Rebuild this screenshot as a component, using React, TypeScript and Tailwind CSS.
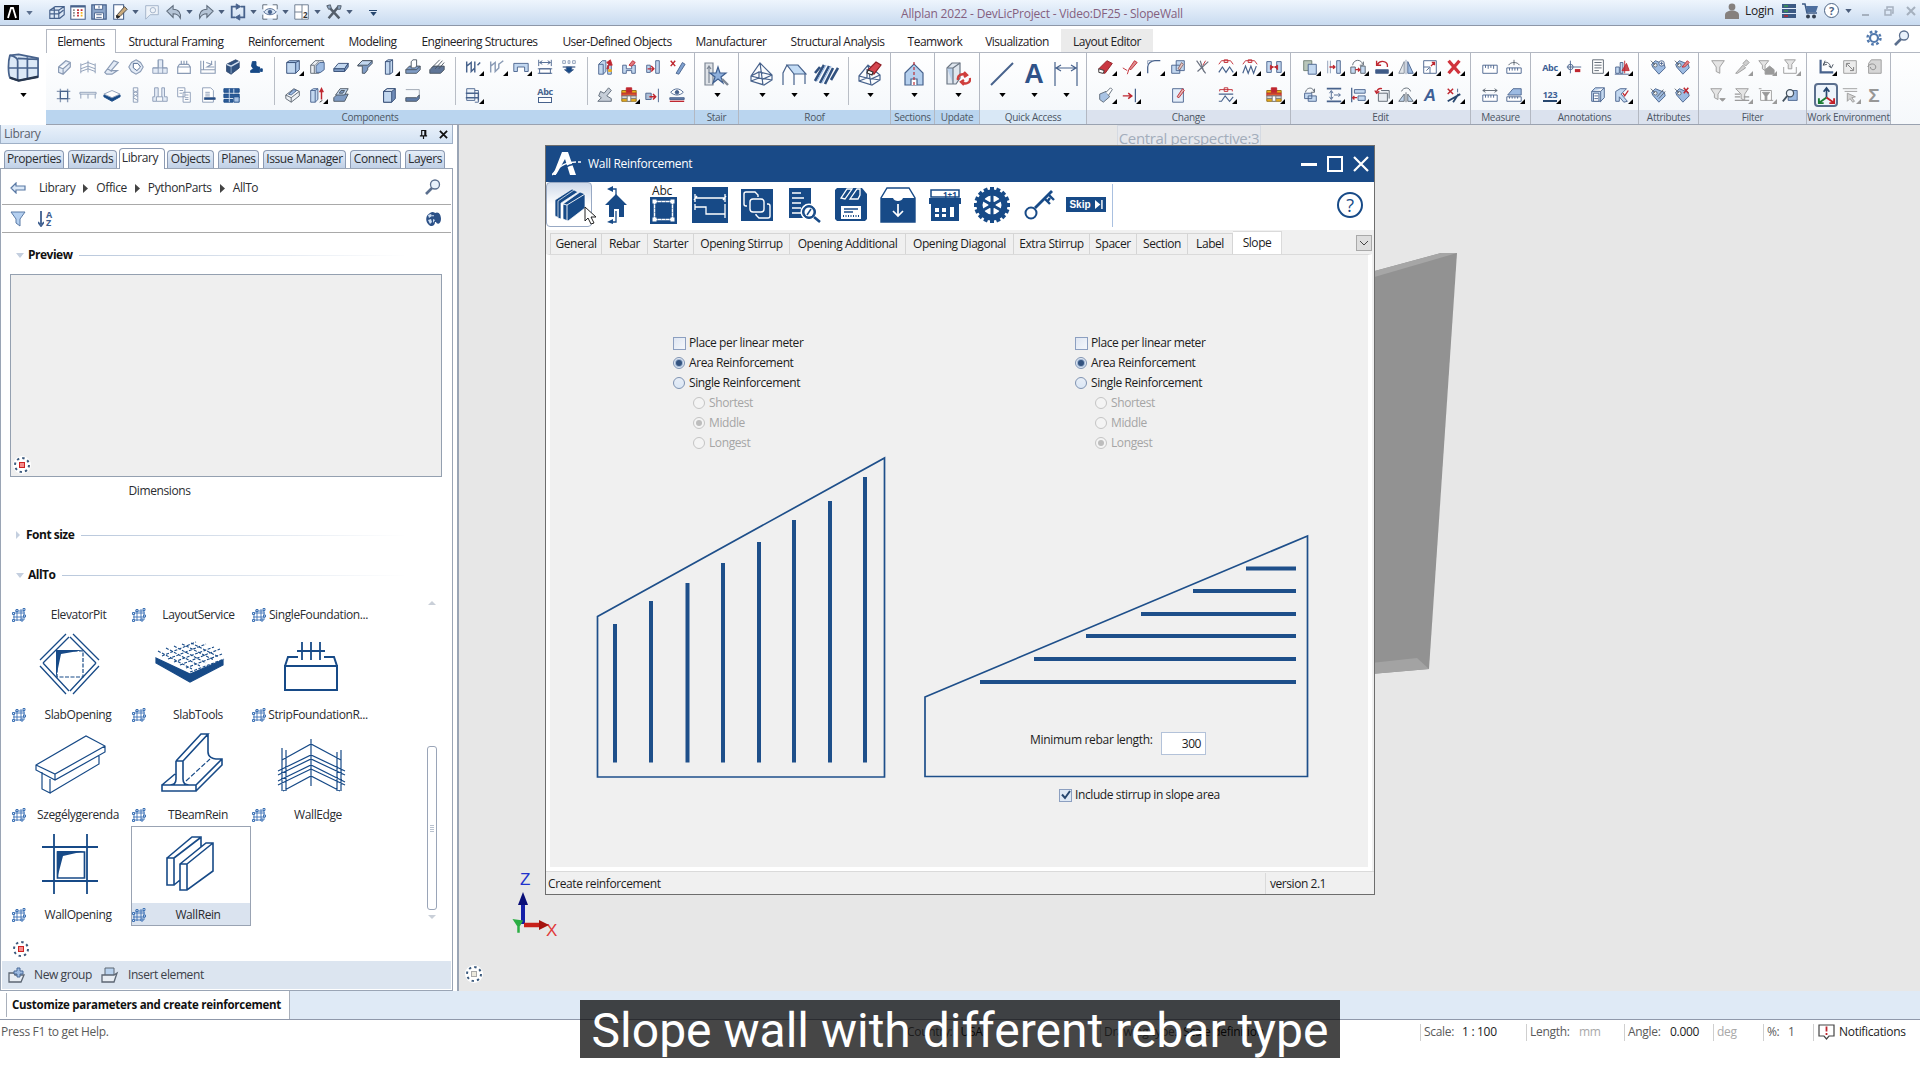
import React from "react";

/* ---------- colours shared by the drawings ---------- */
const B = "#47628c";
const F = "#c3d8f0";
const D = "#174a87";
const R = "#bf2730";
const G = "#8a9bb5";
const W = "#ffffff";
const N = "none";
const K = "#9a9a9a";
const Y = "#f2b21c";

/* [path, stroke, fill, stroke width] */
type Shape = [string, string, string?, number?];

const ICONS: Record<string, Shape[]> = {
  /* components */
  walls: [["M4 10L12 3l5 2v5l-8 8l-5-2zM4 10l5 2l8-7M9 12v6", G, "#e3ebf6", 1.3]],
  edge: [["M2 6v11M18 6v11M10 3v13M2 8l8-3l8 3M2 12l8-3l8 3M2 15l8-3l8 3", G]],
  slant: [["M2 16L12 3l5 2l-8 9h7l-6 4H4zM5 12l5 3", G, "#e3ebf6", 1.3]],
  diamond: [["M10 2l5 3l3 5l-3 5l-5 3l-5-3l-3-5l3-5z", G, "#e3ebf6", 1.2], ["M7 6h5l3 4l-4 4l-4-3z", B, W]],
  column: [["M8 2h5v9h5v6H2v-6h6zM2 11h16M8 2v15M13 2v15", G, "#e3ebf6"]],
  found: [["M3 10h14v7H3zM3 10l2-3h10l2 3M7 3v4M10 3v4M13 3v4", G, W, 1.3]],
  gridw: [["M2 3v14h16V3M2 13h16M5 3v10M8 5l6 2l-5 3h8M14 3v4", G, N, 1.2]],
  dark: [["M4 7L14 2l4 2v7L9 18l-5-3z", "#31496f", "#31527f"], ["M4 7l5 2l9-5", "#d2deee", N, 1.6], ["M9 9v8", "#8fa8c8"]],
  person: [["M6 4h4v4l4 4v4H4v-2l3-2l-2-3z", D, D], ["M12 10h2v2h-2zM15 12h2v3h-2z", D, D]],
  frame: [["M6 3v15M14 3v15M2 6h15M2 14h15", G, N, 1.5], ["M6 6h8v8H6z", B, "#f3f7fc", 1.3]],
  beamv: [["M1 7h18v2H1zM2 9v5M10 9v5M18 9v5", G]],
  slab: [["M1 9l9-4l9 4l-9 4z", G, W], ["M1 10l9 4l9-4v2l-9 5l-9-5z", D, D]],
  rod: [["M7 2h5v16H7zM7 5l5 3M7 9l5 3M7 13l5 3M12 5L7 8M12 9l-5 3", G]],
  twocol: [["M4 2h4v10H6v5H2v-5h2zM12 2h3v10h3v5h-5v-5h-1zM8 12h4M6 17h7", G, "#e3ebf6"]],
  docs: [["M3 2h8v10H3zM9 7h8v11H9z", G, W], ["M5 5h4M5 8h3M11 10h4M11 13h4M11 15h4", G]],
  doc: [["M4 2h9l3 3v13H4z", G, W], ["M7 7h5M7 9h5M7 11h5", G], ["M6 13h12v2H6z", B, D]],
  table: [["M1 3h17v4H1zM1 9h17v4H1zM1 15h10v3H1z", D, "#2d5c98"], ["M12 12h6v6h-6z", D, "#a9c3e4"], ["M7 3v15M12 3v6", "#cfe0f4"]],
  wall: [["M3 5l3-2h11v10l-4 4H3z", "#324b73", "#a8c4e8"], ["M3 5h10l4-2M13 5v12", "#324b73"], ["M4 6h8v10H4z", N, F]],
  wall2: [["M3 8l5-5h9v10l-5 4H3zM8 8l4-4", "#59636e", "#eceff3"], ["M9 9l4-4h5v8l-4 3H9z", B, "#9dbbe2"], ["M3 8h4v9", "#59636e"]],
  slab2: [["M2 12l5-6h11l-4 6z", "#324b73", F], ["M2 12v3h12l4-5V6l-4 6zM14 12v3", "#324b73", "#7e9bc4"]],
  tbeam: [["M2 8l5-5h11v3l-5 5v2l-3 4H7v-8H2z", "#47525f", "#7e9bc4"], ["M2 8l5-5h11l-5 5z", "#47525f", F]],
  pillar: [["M6 4l3-2h5v14l-3 2H6zM6 4h5v14M11 4l3-2", "#324b73", F]],
  footing: [["M2 13l4-4h12v4l-4 4H2z", "#47525f", "#7e9bc4"], ["M2 13h12l4-4", "#47525f"], ["M8 11V4l2-2h4v7l-2 2z", "#47525f", W]],
  ramp: [["M2 13l4-4h12v4l-4 4H2z", "#47525f", "#5f7597"], ["M4 11l9-9M8 12l8-9M12 12l6-7", "#47525f"]],
  slot: [["M2 10l9-7l6 3v5l-9 7l-6-4zM2 10l6 3l9-7M8 13v5", "#59636e", "#eef1f5"], ["M5 9l6-5l3 1l-6 5z", B, "#9dbbe2"]],
  raise: [["M3 5l3-2h5v12l-3 3H3zM3 5h5v13M8 5l3-2", B, F], ["M15 15V4M13 7l2-4l2 4", R, N, 1.6], ["M13 18l3-2", "#333"]],
  stairz: [["M2 13l4-4h12l-4 8H2z", "#47525f", "#7e9bc4"], ["M4 10l5-7h9l-4 7z", "#47525f", F], ["M8 8l2-3h4l-2 3z", "#47525f", "#7e9bc4"]],
  cube: [["M4 6l4-3h9v11l-4 4H4z", "#324b73", "#6f8cb8"], ["M4 6h9v12H4z", "#324b73", F], ["M4 6l4-3h9l-4 3z", "#324b73", "#dfeaf7"]],
  curb: [["M2 4h15M17 4v7", "#9aa3af"], ["M2 13h12l3-3v4l-3 3H2z", "#47525f", "#5f7ca8"]],
  rails: [["M3 4v12M3 9l5-4v10l4-4V4M12 4v12M15 8l3-3", B, N, 1.6]],
  rails2: [["M3 4v12M3 9l5-4v10l4-4V6M12 7l5-4", G, N, 1.6]],
  portal: [["M2 6h16v9h-4v-5H6v5H2z", B, F]],
  dimbox: [["M4 12h12v5H4z", B, W], ["M2 12h16M2 17h16M3 2v7M17 2v7M4 5h12M7 3L4 5l3 2M13 3l3 2l-3 2", B]],
  arrowdn: [["M3 3h3v3H3zM9 3h2v3H9zM14 3h3v3h-3z", G, W], ["M3 10h14", B, N, 1.4], ["M7 10h6v3h2l-5 4l-5-4h2z", B, D]],
  layers: [["M3 3h9v13H3z", "#47628c", "#eef4fb"], ["M2 8h14v8M2 13h14", B, N, 1.5], ["M12 5h4v13h-4", B]],
  wallred: [["M3 7l4-4h4v12l-3 3H3zM3 7h5v11M13 8v10h4V8", B, F], ["M16 2l2 6h-4v4h-2l2-5l-2-2z", R, R], ["M14 13h3v2h-3z", Y, Y]],
  clampred: [["M3 17V8h4v4h6V8h4v9h-4v-3H7v3z", B, F], ["M10 8l4-5l3 2l-4 4z", R, "#e07a80"]],
  pushred: [["M3 8h4v8H3zM13 3h4v14h-4z", B, F], ["M4 12h7M8 9l3 3l-3 3", R, N, 1.5]],
  cutred: [["M9 17l7-12l3 2l-7 11z", B, "#7fa1cf"], ["M3 3l5 6M8 3L3 9", R, N, 1.6]],
  mount: [["M2 17h15v-3l-5-3l5-6l-3-3l-5 6l-4-2l-2 5l3 2z", "#5a6675", "#c6ced8"]],
  bricks: [["M2 5h16v3H2zM2 14h16v3H2z", "#8d6a18", Y], ["M2 8h16v3H2z", R, "#d8582f"], ["M2 11h16v3H2z", "#777", "#d9d9d9"], ["M7 2h6v5H7z", R, R], ["M8 11h4v6H8z", "#777", W]],
  pushred2: [["M2 8h6v7H2z", B, "#aebfd6"], ["M6 12h6M10 9l3 3l-3 3", R, N, 1.6], ["M16 3v15", B]],
  eye: [["M2 13h16v2H2z", B, "#5f7ca8"], ["M2 17h16", R, N, 1.5], ["M3 7c4-5 10-5 14 0c-4 4-10 4-14 0z", B, W], ["M8 7a2 2 0 104 0a2 2 0 10-4 0", B, B]],
  /* change */
  eraser: [["M2 12l9-9l6 3l-8 11l-6-1z", "#8f1d24", "#c93640"], ["M2 12l6 2l-1 3l-5-1z", "#333", W]],
  erase2: [["M9 12l6-9l3 2l-7 8z", R, "#dd8d90"], ["M2 11l5 3M9 12l-2 6", R]],
  fillet: [["M3 17V10c0-4 4-7 8-7h6", B, N, 1.4], ["M3 7V3h5", G]],
  box1: [["M3 8h9v9H3zM8 3h9v11H8z", B, F], ["M10 12l4-7l2 2l-4 6z", "#8b6a6a", "#e9c6c0"]],
  scis: [["M4 3l10 14M8 3l4 12M17 4L5 15", "#6b7280", N, 1.3], ["M11 8l3-5", R]],
  wave: [["M2 16l4-6l4 6l4-6l4 6", B, N, 1.3], ["M2 7l3-4h10l3 4M8 2h4v3H8z", R]],
  wave2: [["M2 17l3-8l3 8l3-8l3 8l3-8", B, N, 1.3], ["M2 7l3-4h10l3 4M8 2h4v3H8z", R]],
  hred: [["M2 4h5v12H2zM13 4h5v12h-5z", B, F], ["M6 8l3 2l-3 3zM14 8l-3 2l3 3zM7 10h6", R, R]],
  paint: [["M3 9l7-3l4 6l-7 6l-4-3z", "#5a6675", "#a9c3e4"], ["M10 7l5-5l2 2l-4 6", "#5a6675", W]],
  toline: [["M2 11h9M8 8l4 3l-4 3", R, N, 1.6], ["M16 3v15", B, N, 1.4]],
  edit: [["M4 3h12v15H4z", B, "#e4eefa"], ["M9 12l6-9l2 2l-6 8z", R, "#e1b8b4"]],
  wave3: [["M2 9h16M2 17h3l4-6l5 6l4-5", B, N, 1.2], ["M3 6V4h14v2M8 2h4v4H8z", R]],
  /* edit */
  copy: [["M3 3h9v11H3z", "#6f7f73", "#b9c6ba"], ["M8 7h9v11H8z", B, F]],
  move: [["M13 3h4v14h-4z", B, F], ["M3 3v14M6 3v14", G], ["M5 10h6M9 8l2 2l-2 2", R, N, 1.5]],
  rot: [["M4 8c1-7 10-7 11-1M16 4v4h-4", "#59636e"], ["M2 10h5v7H2zM13 9h5v8h-5z", "#59636e", F], ["M7 13h5M10 11l2 2l-2 2", R, N, 1.4]],
  rot2: [["M3 13h14v4H3z", B, "#3e5b87"], ["M16 10c1-7-8-8-11-3M4 3v5h5", R, N, 1.5]],
  mirror: [["M2 17L8 4v13z", "#7c8694", "#e2e6ea"], ["M12 4l6 13h-6z", B, "#9dbbe2"], ["M10 2v16", G]],
  scale: [["M3 3h14v14H3z", B, W], ["M3 10h7v7M6 14l3-3", B], ["M11 9l4-4M12 5h3v3", R, N, 1.4]],
  delx: [["M4 3l6 7l6-7M4 17l6-7l6 7", "#d0333c", N, 3.6]],
  rotcopy: [["M4 8h8v6H4zM8 11h9v6H8z", B, F], ["M5 7c1-6 9-6 9-1M15 3v4h-4", "#59636e"]],
  dist: [["M2 3h16M2 17h16", B, N, 2], ["M7 6v8M5 8l2-3l2 3M5 12l2 3l2-3M10 10h7M15 8l2 2l-2 2", B]],
  align: [["M3 2v16", B, N, 1.4], ["M6 4h12v4H6zM10 11h8v5h-8z", B, F], ["M4 13h5M6 11l-2 2l2 2", R, N, 1.4]],
  rot3: [["M6 8h10v9H6zM9 5h9v9", "#59636e", "#e9edf2"], ["M10 3C6 2 4 5 4 8M2 5l2 3l3-2", R, N, 1.5]],
  mirr2: [["M2 17L8 9v8zM12 9l6 8h-6z", "#59636e", F], ["M5 6c2-5 9-5 10 0M10 7v11", "#59636e"]],
  xi: [["M3 3l6 6M9 3L3 9", R, N, 1.6], ["M14 3v4", B], ["M3 17L17 9M9 18l6-9", "#27476f", N, 2]],
  /* measure */
  ruler: [["M2 8h16v9H2zM5 8v3M8 8v4M11 8v3M14 8v4", B, W]],
  rulera: [["M2 11h16v6H2zM5 11v3M8 11v3M11 11v3M14 11v3", B, W], ["M4 8c2-4 10-4 12 0M10 2v6", "#59636e"]],
  rulerl: [["M2 10h16v7H2zM5 10v3M8 10v3M11 10v3M14 10v3", B, W], ["M2 5h16M5 3L2 5l3 2M15 3l3 2l-3 2", "#59636e"]],
  rulerv: [["M2 12h16v5H2zM5 12v2M8 12v2M11 12v2M14 12v2", B, W], ["M3 10l6-7h9v7z", B, "#9dbbe2"]],
  /* annotations */
  label: [["M2 10h16M6 3v14M3 10a3 3 0 106 0a3 3 0 10-6 0", B], ["M11 14h6", R, N, 3.4]],
  page: [["M4 2h12v15H4zM6 5h8M6 8h8M6 11h8M6 14h5", "#59636e", W]],
  bars: [["M3 10h4v7H3zM8 5h3v12H8z", B, F], ["M13 3v14M10 14l5-8l3 8z", R, "#c84a52"], ["M2 18h16", B]],
  page3: [["M3 6l4-4h10v11l-4 4H3zM3 6h10l4-4M13 6v12", B, F], ["M5 8h6v9H5z", B, W], ["M6 11h4M6 14h4", B]],
  cube3: [["M3 6l5-3h7l-6 6l7 8l-4 1l-5-6v5H3z", B, F], ["M11 8l2 3l4-6", R, N, 1.5]],
  /* attributes */
  tag1: [["M3 7l4-4l10 4l1 4l-7 7l-7-8z", B, "#9dbbe2"], ["M2 3l5 5M5 8a2 2 0 104 0a2 2 0 10-4 0", "#59636e", W], ["M11 6a3 3 0 106 0a3 3 0 10-6 0M14 4v4M12 6h4", B, W]],
  tag2: [["M3 7l4-4l10 4l1 4l-7 7l-7-8z", B, "#9dbbe2"], ["M2 3l5 5M5 8a2 2 0 104 0a2 2 0 10-4 0", "#59636e", W], ["M10 10l6-7l2 2l-5 5z", R, "#e28a8a"]],
  tag3: [["M3 7l4-4l10 4l1 4l-7 7l-7-8z", B, "#9dbbe2"], ["M2 3l5 5M5 8a2 2 0 104 0a2 2 0 10-4 0", "#59636e", W], ["M9 12l7-8M11 14l7-8", "#59636e"]],
  tag4: [["M3 7l4-4l10 4l1 4l-7 7l-7-8z", B, "#9dbbe2"], ["M2 3l5 5M5 8a2 2 0 104 0a2 2 0 10-4 0", "#59636e", W], ["M12 2l5 6M17 2l-5 6", R, N, 1.7]],
  /* filter */
  fil: [["M3 3h14l-5 7v7l-4-2v-5z", K, "#e4e4e4"]],
  pip: [["M3 17l8-9l3 3l-9 6zM11 6l4-4l3 3l-4 4z", K, "#cfcfcf"]],
  filh: [["M2 3h11l-4 5v6l-3-2V8z", K, "#e4e4e4"], ["M9 13l5-4l5 4v5H9z", K, K]],
  filt: [["M4 2h12l-4 5v5H8V7z", K, "#e4e4e4"], ["M3 10v7h14v-7", K]],
  fild: [["M2 3h12l-4 6v6l-4-2V9z", K, "#e4e4e4"], ["M12 14h6l-3 3z", K, K]],
  fill: [["M3 3h14l-4 6v7l-4-2V9z", K, "#e4e4e4"], ["M2 9h6M2 12h6M2 16h16M12 12h6", K, N, 1.5]],
  filb: [["M4 5h12v11H4zM2 3h3M15 16h3", K, W], ["M6 7h8l-3 4v5h-2v-5z", K, K]],
  find: [["M8 5h10v11H8z", B, "#9dbbe2"], ["M6 8a4 4 0 108 0a4 4 0 10-8 0", "#44525f", "#eef4fb", 1.4], ["M7 11l-5 6", "#44525f", N, 2]],
  /* work environment */
  axes: [["M4 2v14h14", B, N, 2.4], ["M7 8c1-5 7-4 8 2M9 3L7 8l4-1M13 9l3 2l2-4", "#3f4a57"]],
  expand: [["M3 3h14v14H3z", K, "#ececec"], ["M6 10V6h4M14 10v4h-4M7 7l6 6", "#777"]],
  rotpg: [["M7 2h11v15H4V6z", K, "#d6d6d6"], ["M3 10c2-5 9-4 9 0c0 4-6 4-6 0", "#8a8a8a"]],
  ptr: [["M2 3h16M4 6h14", K], ["M7 8l9 4l-4 1l3 4l-2 1l-3-4l-3 3z", K, "#d4d4d4"]],
  /* title bar */
  q1: [["M2 8l6-4h10v9l-5 4H2zM2 8h10l6-4M12 8v9M7 4v13M2 12h10l5-4", B, "#dce8f6", 1.3]],
  q2: [["M2 3h16v15H2z", B, W, 1.2], ["M2 4h16", B, N, 2], ["M5 8h1M5 11h1M5 14h1", "#222", N, 2], ["M9 8h2M9 11h2M9 14h2M13 8h2", R, N, 2], ["M13 11h2M13 14h2", Y, N, 2]],
  q3: [["M2 2h16v16H2z", B, "#8ba5c9", 1.3], ["M5 2h9v5H5zM5 11h10v7H5z", B, W], ["M10 3v3M7 13h6M7 16h6", B]],
  q4: [["M3 2h11v16H3z", B, W, 1.2], ["M7 13l8-9l3 3l-8 8l-4 1z", "#444", "#c9a97b"], ["M6 14l4 1l-3 2z", "#222", "#222"]],
  q5: [["M3 3h14v10h-9l-5 5z", "#9fb0c6", "#eef3f9"], ["M8 8a3 3 0 106 0a3 3 0 10-6 0", "#9fb0c6"]],
  undo: [["M2 9l7-6v4c6 0 9 4 8 10c-2-4-4-5-8-5v4z", "#5e6b7b", "#b5c4d6", 1.2]],
  redo: [["M18 9l-7-6v4c-6 0-9 4-8 10c2-4 4-5 8-5v4z", "#5e6b7b", "#b5c4d6", 1.2]],
  q8: [["M8 4H3v12h4M12 16h5V4h-4", B, N, 2], ["M8 1l5 3l-5 3zM12 13l-5 3l5 3z", B, B]],
  q9: [["M2 2h5M13 2h5M18 2v5M18 13v5M2 18h5M13 18h5M2 2v5M2 13v5", "#59636e"], ["M3 3h14v14H3z", N, W], ["M3 10c4-5 10-5 14 0c-4 4-10 4-14 0z", B, "#dbe8f7"], ["M8 10a2 2 0 104 0a2 2 0 10-4 0", B, B]],
  q10: [["M2 2h15v16H2z", "#66768a", W], ["M2 10h8M10 2v16", "#66768a"]],
  q11: [["M3 3l13 14M4 17L15 4", "#555f6b", N, 2.8], ["M2 3l4-1l1 4l-3 1zM14 3l4 0l-1 4l-3 0z", "#555f6b", "#8fa6c0"]],
};

function Icon({ n, className = "size-5" }: { n: string; className?: string }) {
  return (
    <svg viewBox="0 0 20 20" className={`${className} shrink-0`}>
      {ICONS[n].map(([d, s, f, w], i) => (
        <path key={i} d={d} stroke={s} fill={f ?? "none"} strokeWidth={w ?? 1} />
      ))}
    </svg>
  );
}

function Caret({ className = "text-black" }: { className?: string }) {
  return (
    <svg viewBox="0 0 8 5" className={`h-[4px] w-[7px] shrink-0 ${className}`}>
      <path d="M0 0h8L4 5z" fill="currentColor" />
    </svg>
  );
}

/* ---------- ribbon ---------- */
function Glyph({ n }: { n: string }) {
  switch (n) {
    case "":
      return null;
    case "abcbox":
      return (
        <div className="flex flex-col items-center">
          <span className="text-[9px] font-bold leading-[9px] tracking-[-0.4px] text-[#47628c]">Abc</span>
          <span className="mt-px h-[6px] w-3.5 border border-[#47628c] bg-white" />
        </div>
      );
    case "Abc":
      return <span className="pt-0.5 text-[9px] font-bold tracking-[-0.3px] text-[#3d5f95]">Abc</span>;
    case "123":
      return (
        <span className="border-b-2 border-[#27476f] text-[9px] font-bold leading-[11px] tracking-[-0.3px] text-[#3d5f95]">123</span>
      );
    case "txa":
      return <span className="font-['Liberation_Sans',sans-serif] text-[17px] font-bold italic leading-none text-[#3d5f95]">A</span>;
    case "sum":
      return <span className="font-['Liberation_Sans',sans-serif] text-[19px] font-bold leading-none text-[#979797]">Σ</span>;
    case "xyz":
      return (
        <svg viewBox="0 0 20 20" className="size-[19px] shrink-0">
          <path d="M10 12V3M7 6l3-4l3 4" stroke="#27476f" strokeWidth="1.8" fill="none" />
          <path d="M10 12l-7 5M2 13v5h5" stroke="#1c7d33" strokeWidth="2" fill="none" />
          <path d="M10 12l7 5M18 13v5h-5" stroke="#c4202a" strokeWidth="2" fill="none" />
        </svg>
      );
    default:
      return <Icon n={n} className="size-[18px]" />;
  }
}

const GREY = ["fil", "pip", "filh", "filt", "fild", "fill", "filb", "ptr"];

function Cells({ rows }: { rows: string[][] }) {
  return (
    <div className="flex flex-col">
      {rows.map((row, i) => (
        <div key={i} className="flex h-7">
          {row.map((name, j) => {
            const corner = name.endsWith("*");
            const n = name.replace("*", "");
            return (
              <div
                key={j}
                className={`relative flex w-6 items-center justify-center ${
                  n === "xyz" ? "my-[2px] rounded-sm border-2 border-[#5b6f8e] bg-[#eef4fb]" : ""
                }`}
              >
                <Glyph n={n} />
                {corner && (
                  <svg
                    viewBox="0 0 5 5"
                    className={`absolute bottom-[5px] right-px size-[5px] ${GREY.includes(n) ? "text-[#9a9a9a]" : "text-black"}`}
                  >
                    <path d="M5 0v5H0z" fill="currentColor" />
                  </svg>
                )}
              </div>
            );
          })}
        </div>
      ))}
    </div>
  );
}

function Sep({ className = "w-3" }: { className?: string }) {
  return (
    <div className={`flex shrink-0 justify-center pt-1 ${className}`}>
      <div className="h-12 w-px bg-[#b9bec6]" />
    </div>
  );
}

function Big({ children }: { children: React.ReactNode }) {
  return (
    <div className="flex h-14 w-8 flex-col items-center pt-2">
      <svg viewBox="0 0 26 26" className="size-[26px]" fill="none" stroke={B} strokeWidth="1.2">
        {children}
      </svg>
      <Caret className="mt-[6px] text-black" />
    </div>
  );
}

function Group({ label, width, band, pad = "pl-[7px]", children }: { label: string; width: string; band: string; pad?: string; children: React.ReactNode }) {
  return (
    <div className={`flex h-full shrink-0 flex-col border-r border-[#b3b8c2] ${width}`}>
      <div className={`flex h-[57px] bg-gradient-to-b from-white to-[#f5f8fb] ${pad}`}>{children}</div>
      <div className={`flex h-[14px] items-center justify-center whitespace-nowrap text-[10px] tracking-[-0.3px] text-[#4c5563] ${band}`}>{label}</div>
    </div>
  );
}

const BLUE = "bg-[#bad5ef]";
const PALE = "bg-[#dbe2ee]";

function Ribbon() {
  return (
    <div className="flex h-[72px] shrink-0 border-b border-[#9aa2b0]">
      <Group label="Components" width="w-[649px]" band={BLUE} pad="pl-[6px]">
        <Cells
          rows={[
            ["walls", "edge", "slant", "diamond", "column", "found", "gridw", "dark", "person"],
            ["frame", "beamv", "slab", "rod", "twocol", "docs", "doc", "table", ""],
          ]}
        />
        <Sep className="w-[13px]" />
        <Cells
          rows={[
            ["wall*", "wall2", "slab2", "tbeam", "pillar*", "footing", "ramp"],
            ["slot", "raise*", "stairz", "", "cube", "curb", ""],
          ]}
        />
        <Sep />
        <Cells
          rows={[
            ["rails*", "rails2*", "portal*", "dimbox", "arrowdn"],
            ["layers*", "", "", "abcbox", ""],
          ]}
        />
        <Sep />
        <Cells
          rows={[
            ["wallred", "clampred", "pushred", "cutred"],
            ["mount", "bricks*", "pushred2", "eye"],
          ]}
        />
      </Group>
      <Group label="Stair" width="w-[44px]" band={BLUE} pad="pl-[6px]">
        <Big>
          <path d="M1 2h8v22H1zM5 22V5M3 8l2-3l2 3" fill="#dfe3e8" stroke="#7c8694" />
          <path d="M14 6l2 6h6l-5 4l2 6l-5-4l-5 4l2-6l-5-4h6z" fill="#8fb0dc" stroke="#3f5f90" />
          <path d="M18 18l6 6" strokeWidth="2.4" stroke="#7c8694" />
        </Big>
      </Group>
      <Group label="Roof" width="w-[152px]" band={BLUE}>
        <Big>
          <path d="M2 15L11 2l12 12v5l-8 5L2 20zM2 15l12 3l9-4M11 2l3 22M2 15l8-4l13 3M10 11v7M2 20l8-3l13 2" />
        </Big>
        <Big>
          <path d="M6 4h11l8 9H13z" fill="#c3dcf5" />
          <path d="M6 4L2 12v12M13 13v11M24 13v10M2 12L6 4" />
        </Big>
        <Big>
          <path d="M2 20L11 4M7 22l9-17M12 23l8-16M2 12l5-6M18 19l7-12" strokeWidth="2.6" stroke="#31517f" />
          <path d="M4 20L13 4M9 22l9-17" stroke="#9dbbe2" />
        </Big>
        <Sep />
        <Big>
          <path d="M2 15L11 4l12 10v5l-8 5L2 20zM2 15l12 3l9-4M11 4l3 20M2 20l8-3l13 2M10 8v9" />
          <path d="M11 9l8-8l5 3l-7 9l-5-1z" fill="#d5454e" stroke="#8f1d24" />
          <path d="M11 9l5 2l-1 3l-5-2z" fill="#fff" stroke="#333" />
        </Big>
      </Group>
      <Group label="Sections" width="w-[44px]" band={BLUE}>
        <Big>
          <path d="M4 12l9-9l9 9v12H4z" fill="#b5d0ee" />
          <path d="M10 24v-6h6v6" fill="#fff" />
          <path d="M13 1v24" stroke="#b93038" strokeDasharray="3 2" />
        </Big>
      </Group>
      <Group label="Update" width="w-[45px]" band={BLUE}>
        <Big>
          <path d="M2 7l5-5h8v15l-4 6H2z" fill="#dfe6ee" stroke="#6b7684" />
          <path d="M2 7h6v16M8 7l7-5" fill="#bcd1ea" stroke="#6b7684" />
          <path d="M13 19c-1-5 4-7 8-5M19 11l3 3l-3 2M25 17c1 5-5 7-8 4M19 24l-3-3l3-2" stroke="#cf3e3c" strokeWidth="2.4" />
        </Big>
      </Group>
      <Group label="Quick Access" width="w-[107px]" band="bg-[#d9e8f6]" pad="pl-[6px]">
        <Big>
          <path d="M2 24L24 2" strokeWidth="2" />
        </Big>
        <div className="flex h-14 w-8 flex-col items-center pt-2">
          <span className="h-[26px] font-['Liberation_Sans',sans-serif] text-[27px] font-bold leading-[27px] text-[#2f5288]">A</span>
          <Caret className="mt-[6px] text-black" />
        </div>
        <Big>
          <path d="M2 1v24M24 1v24M3 7h20M8 4L3 7l5 3M18 4l5 3l-5 3" />
        </Big>
      </Group>
      <Group label="Change" width="w-[204px]" band={PALE}>
        <Cells
          rows={[
            ["eraser*", "erase2*", "fillet*", "box1", "scis", "wave*", "wave2*", "hred*"],
            ["paint*", "toline*", "", "edit", "", "wave3*", "", "bricks*"],
          ]}
        />
      </Group>
      <Group label="Edit" width="w-[180px]" band={PALE}>
        <Cells
          rows={[
            ["copy*", "move*", "rot*", "rot2*", "mirror*", "scale*", "delx*"],
            ["rotcopy", "dist*", "align*", "rot3*", "mirr2*", "txa", "xi*"],
          ]}
        />
      </Group>
      <Group label="Measure" width="w-[60px]" band={PALE}>
        <Cells rows={[["ruler", "rulera"], ["rulerl", "rulerv*"]]} />
      </Group>
      <Group label="Annotations" width="w-[108px]" band={PALE}>
        <Cells
          rows={[
            ["Abc*", "label", "page*", "bars*"],
            ["123*", "", "page3", "cube3*"],
          ]}
        />
      </Group>
      <Group label="Attributes" width="w-[60px]" band={PALE}>
        <Cells rows={[["tag1", "tag2"], ["tag3", "tag4"]]} />
      </Group>
      <Group label="Filter" width="w-[108px]" band={PALE}>
        <Cells
          rows={[
            ["fil", "pip*", "filh*", "filt*"],
            ["fild", "fill*", "filb*", "find"],
          ]}
        />
      </Group>
      <Group label="Work Environment" width="w-[84px]" band={PALE}>
        <Cells
          rows={[
            ["axes*", "expand", "rotpg"],
            ["xyz", "ptr*", "sum"],
          ]}
        />
      </Group>
      <div className="flex-1 bg-gradient-to-b from-white to-[#f5f8fb]" />
    </div>
  );
}

const QUICK: [string, string, boolean][] = [
  ["q1", "w-[21px]", false],
  ["q2", "w-[21px]", false],
  ["q3", "w-[21px]", false],
  ["q4", "w-[32px]", true],
  ["q5", "w-[22px]", false],
  ["undo", "w-[32px]", true],
  ["redo", "w-[32px]", true],
  ["q8", "w-[32px]", true],
  ["q9", "w-[32px]", true],
  ["q10", "w-[32px]", true],
  ["q11", "w-[32px]", true],
];

function TitleBar() {
  return (
    <div className="relative flex h-[26px] shrink-0 items-center border-b border-[#8d97a8] bg-gradient-to-b from-[#eef5fd] to-[#c9dbf0]">
      <div className="ml-1 mr-[7px] flex h-[15px] w-[15px] items-center justify-center bg-black">
        <svg viewBox="0 0 12 12" className="size-3">
          <path d="M2 11L5 1h2l3 10" stroke="white" strokeWidth="1.8" fill="none" />
        </svg>
      </div>
      <Caret className="mr-[15px] text-[#5b6f8e]" />
      {QUICK.map(([n, w, c]) => (
        <div key={n} className={`relative -mt-0.5 flex items-center ${w}`}>
          <Icon n={n} className="size-[18px]" />
          {n === "q10" && <span className="absolute left-[10px] top-[7px] text-[8px] font-bold leading-[9px] text-[#333]">2</span>}
          {c && <Caret className="ml-[3px] text-[#4b5e7c]" />}
        </div>
      ))}
      <div className="ml-3 flex flex-col items-center gap-px">
        <div className="h-px w-2 bg-[#27476f]" />
        <Caret className="text-[#27476f]" />
      </div>
      <div className="absolute left-[901px] top-[6px] whitespace-nowrap text-[12px] leading-4 tracking-[-0.2px] text-[#84607e]">
        Allplan 2022 - DevLicProject - Video:DF25 - SlopeWall
      </div>
      <div className="-mt-1 ml-auto flex items-center pr-1">
        <svg viewBox="0 0 14 16" className="mr-1.5 h-4 w-3.5">
          <circle cx="7" cy="4" r="3.4" fill="#85807e" />
          <path d="M0 16V12c0-6 14-6 14 0v4z" fill="#85807e" />
        </svg>
        <span className="w-[37px] text-[12px] tracking-[-0.3px] text-[#222]">Login</span>
        <svg viewBox="0 0 14 16" className="mr-1.5 h-4 w-3.5">
          <path d="M0 1h14v4H0zM0 6h14v4H0zM0 11h14v4H0z" fill="#3c5a85" />
          <path d="M2 3h4M2 8h4" stroke="#3d9a50" strokeWidth="1.500" />
          <path d="M2 13h4" stroke={R} strokeWidth="1.500" />
        </svg>
        <svg viewBox="0 0 16 16" className="mr-1.5 size-4">
          <path d="M0 1h3l2 9h10" stroke="#3c5a85" strokeWidth="1.500" fill="none" />
          <path d="M4 3h12l-2 6H5z" fill="#4d6f9f" />
          <circle cx="6" cy="13.500" r="2" fill="#333f50" />
          <circle cx="12" cy="13.500" r="2" fill="#333f50" />
        </svg>
        <div className="mr-1.5 flex size-[15px] items-center justify-center rounded-full border-[1.5px] border-[#4c6485] bg-white text-[11px] font-bold leading-none text-[#4c6485]">?</div>
        <Caret className="mr-2.5 text-[#4b5e7c]" />
        <div className="mr-[15px] mt-2 h-[2px] w-[7px] bg-[#a5b0be]" />
        <svg viewBox="0 0 10 10" className="mr-3 size-[10px]" fill="none" stroke="#a5b0be" strokeWidth="1.500">
          <path d="M1 4h6v5H1zM3 3V1h6v6H8" />
        </svg>
        <svg viewBox="0 0 10 10" className="size-[10px]" stroke="#a5b0be" strokeWidth="2">
          <path d="M1 1l8 8M9 1L1 9" />
        </svg>
      </div>
    </div>
  );
}

const MENU: [string, string][] = [
  ["Structural Framing", "w-[120px]"],
  ["Reinforcement", "w-[100px]"],
  ["Modeling", "w-[73px]"],
  ["Engineering Structures", "w-[141px]"],
  ["User-Defined Objects", "w-[134px]"],
  ["Manufacturer", "w-[94px]"],
  ["Structural Analysis", "w-[119px]"],
  ["Teamwork", "w-[76px]"],
  ["Visualization", "w-[88px]"],
];

function Magnifier() {
  return (
    <svg viewBox="0 0 16 16" className="size-4" fill="none">
      <circle cx="10" cy="5.500" r="4.500" fill="#e8f1fb" stroke="#5b6f8e" strokeWidth="1.300" />
      <path d="M7 9l-6 6" stroke="#5b6f8e" strokeWidth="2.600" />
    </svg>
  );
}

function MenuRow() {
  return (
    <div className="flex h-[27px] shrink-0 whitespace-nowrap border-b border-[#b3b8c2] pt-[3px] text-[12px] tracking-[-0.5px] text-[#1f2226]">
      <div className="-mb-px flex w-[70px] items-center justify-center border border-b-0 border-[#b3b8c2] bg-white pt-px">Elements</div>
      {MENU.map(([t, w]) => (
        <div key={t} className={`flex items-center justify-center pt-[3px] ${w}`}>
          {t}
        </div>
      ))}
      <div className="flex w-[92px] items-center justify-center bg-[#ebebeb] pt-[3px]">Layout Editor</div>
      <div className="ml-auto mr-[10px] flex items-center gap-3 pb-[5px]">
        <svg viewBox="0 0 16 16" className="size-4" fill="none">
          <circle cx="8" cy="8" r="6.500" stroke="#5279ad" strokeWidth="2.400" strokeDasharray="2.600 2.500" />
          <circle cx="8" cy="8" r="4" stroke="#5279ad" strokeWidth="2.200" fill="#fff" />
        </svg>
        <Magnifier />
      </div>
    </div>
  );
}

/* ---------- library palette ---------- */
const PTABS: [string, string][] = [
  ["Properties", "w-[60px] mr-1"],
  ["Wizards", "w-[49px] mr-[2px]"],
  ["Library", "w-[46px] mr-[2px] pr-1"],
  ["Objects", "w-[47px] mr-1"],
  ["Planes", "w-[41px] mr-1"],
  ["Issue Manager", "w-[83px] mr-1"],
  ["Connect", "w-[51px] mr-1"],
  ["Layers", "w-[40px]"],
];

function Target({ fill, stroke }: { fill: string; stroke: string }) {
  return (
    <svg viewBox="0 0 18 18" className="size-[18px]" fill="none">
      <circle cx="9" cy="9" r="9" fill="#fff" />
      <circle cx="9" cy="9" r="7" stroke="#3c5a7d" strokeWidth="2" strokeDasharray="2.400 3.100" />
      <rect x="6.500" y="6.500" width="5" height="5" fill={fill} stroke={stroke} />
    </svg>
  );
}

function Heading({ label, open, className }: { label: string; open: boolean; className: string }) {
  return (
    <div className={`flex h-5 items-center text-[12px] font-bold tracking-[-0.5px] text-[#111] ${className}`}>
      <svg viewBox="0 0 8 8" className="mr-1 size-2">
        <path d={open ? "M0 2h8L4 7z" : "M2 0v8l4-4z"} fill="#c4cfdf" />
      </svg>
      {label}
      <div className="ml-[7px] mr-[44px] h-px flex-1 bg-gradient-to-r from-[#b9c8dc] to-transparent" />
    </div>
  );
}

function Net() {
  return (
    <svg viewBox="0 0 14 14" className="size-[14px] shrink-0" fill="none" stroke="#3f73b5">
      <path d="M3 3h9v9M2 4v8h8M5 1v12M9 1v12M1 5h12M1 9h12" strokeWidth="0.900" />
      <path d="M4 1.500h2v2H4zM11 .5h2v2h-2zM.5 4.500h2v2h-2zM.5 11.500h2v2h-2zM9 11h2v2H9zM11.500 7h2v2h-2z" fill="#dbe8f7" />
    </svg>
  );
}

const THUMBS: Record<string, React.ReactNode> = {
  SlabOpening: (
    <>
      <path d="M6 31L32 5M9 34L35 8M39 5l26 26M36 8l26 26M6 37l26 28M9 34l26 28M65 37L39 65M62 34L36 62" strokeWidth="1.300" />
      <path d="M23 22h26v26H23z" strokeDasharray="4 1.500" />
      <path d="M22 21h28l-23 4l-5 24z" fill={D} stroke="none" />
    </>
  ),
  SlabTools: (
    <>
      <path d="M2 29l34 16l33-14v5L36 53L2 34z" fill={D} />
      <path d="M8 27l34-14M14 30l38-15M20 33l40-15M26 36l40-16M32 39l36-14M36 43l34-13M4 22l34 18M12 19l34 18M20 17l32 17M28 15l32 16M37 14l28 14" strokeDasharray="3 1.500" strokeWidth="1.100" />
    </>
  ),
  StripFoundationR: (
    <>
      <path d="M11 37h52v24H11zM11 37l3-9h10M63 37l-3-9H50" strokeWidth="2" />
      <path d="M23 22h28M28 13v18M37 13v18M46 13v18" strokeWidth="1.800" />
    </>
  ),
  "Szegélygerenda": <path d="M2 36L52 7l19 10v6L21 51L2 41zM2 36l19 9l50-28M21 45v6M8 43v17l8 4v-14M16 64l49-29v-8" />,
  TBeamRein: (
    <>
      <path d="M8 56h34v6H8zM8 56l13-11M22 32v18c0 5-3 6-6 6M29 32v18c0 4 2 6 6 6M22 32h7M22 32L47 5h7L29 32M54 5v18c0 5 5 7 8 7h6v6L42 62M42 56l26-26" strokeWidth="1.600" />
      <path d="M32 52l24-22" strokeDasharray="5 2" />
    </>
  ),
  WallEdge: (
    <path d="M8 19v43M12 21v41M63 23v39M67 21v41M37 10v47M8 31l29-16l30 16M4 42l33-16l34 16M4 46l33-16l34 16M4 52l33-16l34 17M4 56l33-16M9 62l28-15l29 15M37 40l34 16" strokeWidth="1.200" />
  ),
  WallOpening: (
    <>
      <path d="M20 5v60M53 5v60M8 18h56M8 52h56" strokeWidth="1.800" />
      <path d="M23.500 23h27v26h-27z" strokeWidth="1.700" />
      <path d="M23 22h28l-22 5l-6 23z" fill={D} stroke="none" />
    </>
  ),
  WallRein: (
    <path d="M13 29L38 8h9v10M13 29h7v27h-7zM20 29L46 9M20 56l6-5M26 35L52 14h7v28L33 61h-7zM26 35h7v26M33 35L59 14" strokeWidth="1.600" />
  ),
};

function Item({ label, selected = false }: { label: string; selected?: boolean }) {
  return (
    <div className={`flex h-[100px] w-[120px] flex-col border ${selected ? "border-[#99a3b3]" : "border-transparent"}`}>
      <div className="flex h-[76px] justify-center">
        <svg viewBox="0 0 74 74" className="mt-[2px] size-[74px]" fill="none" stroke={D} strokeWidth="1.200">
          {THUMBS[label.replace("...", "")]}
        </svg>
      </div>
      <div className={`flex flex-1 items-center pt-0.5 ${selected ? "bg-[#dae3ef]" : ""}`}>
        <Net />
        <span className="flex-1 whitespace-nowrap text-center">{label}</span>
      </div>
    </div>
  );
}

function LibraryPanel() {
  return (
    <div className="flex h-[866px] w-[453px] shrink-0 flex-col text-[12px] tracking-[-0.4px] text-[#2a2c30]">
      <div className="flex h-[19px] items-center border border-t-0 border-[#9fb0c6] bg-gradient-to-b from-[#e9f1fa] to-[#d3e2f3] pl-[3px] text-[#5a616c]">
        Library
        <svg viewBox="0 0 10 10" className="ml-auto mr-[11px] size-[9px]" fill="none" stroke="#111" strokeWidth="1.300">
          <path d="M3 0v6M2.500 .5h5v5.500M6.500 0v6M1 6.500h8M5 6v4" />
        </svg>
        <svg viewBox="0 0 10 10" className="mr-1 size-[9px]" stroke="#111" strokeWidth="2">
          <path d="M1 1l8 8M9 1L1 9" />
        </svg>
      </div>
      <div className="flex h-6 items-end whitespace-nowrap pl-1 leading-[16px]">
        {PTABS.map(([t, w]) => (
          <div
            key={t}
            className={`${w} rounded-t border border-b-0 border-[#8d9bb3] text-center ${
              t === "Library" ? "z-10 -mb-px h-[21px] bg-white leading-[18px]" : "h-[18px] bg-gradient-to-b from-[#e6eef8] to-[#c0d0e6]"
            }`}
          >
            {t}
          </div>
        ))}
      </div>
      <div className="flex flex-1 flex-col border border-[#9aa5b5] bg-white px-px">
        <div className="flex h-9 items-center border-b border-[#a9a9a9] pr-[10px] pt-[3px]">
          <svg viewBox="0 0 16 12" className="ml-2 mr-[13px] h-3 w-4">
            <path d="M1 6l5-5v3h9v4H6v3z" fill="#dbe8f7" stroke="#5b7aa5" strokeWidth="1.200" />
          </svg>
          {["Library", "Office", "PythonParts", "AllTo"].map((t, i) => (
            <React.Fragment key={t}>
              {i > 0 && (
                <svg viewBox="0 0 5 9" className="mx-[8px] h-[9px] w-[5px]">
                  <path d="M0 0v9l5-4.500z" fill="#444" />
                </svg>
              )}
              <span>{t}</span>
            </React.Fragment>
          ))}
          <div className="mb-[3px] ml-auto">
            <Magnifier />
          </div>
        </div>
        <div className="flex h-7 items-center border-b border-[#a9a9a9] pr-[10px]">
          <svg viewBox="0 0 16 16" className="ml-2 mr-3 size-4">
            <path d="M1 1h14L10 8v7l-4-3V8z" fill="#b5d0f0" stroke="#5b7aa5" />
          </svg>
          <svg viewBox="0 0 6 16" className="h-4 w-[6px]">
            <path d="M3 0v13M0 11l3 4l3-4" stroke="#3f5f8f" strokeWidth="1.800" fill="none" />
          </svg>
          <div className="ml-0.5 flex flex-col text-[9px] font-bold leading-[8px] text-[#3f5f8f]">
            <span>A</span>
            <span>Z</span>
          </div>
          <svg viewBox="0 0 16 16" className="ml-auto size-4">
            <path d="M5 2c3-2 5 0 5 0c4-2 6 2 6 6c0 5-4 6-5 3l-1 0c0 5-5 5-7 2c-3-4-2-9 2-11z" fill="#2c5187" />
            <path d="M3 4l3-1l1 2l-3 2zM7 4h2l-1 2zM3 9l3-1l1 3l-2 2zM8 8l2 1l-2 3z" fill="#cfe0f4" />
          </svg>
        </div>
        <Heading label="Preview" open className="ml-[14px] mt-[12px]" />
        <div className="ml-2 mr-[9px] mt-[9px] flex h-[203px] items-end border border-[#94a0b0] bg-[#efefef] p-[2px]">
          <Target fill="#f58d8d" stroke="#c22" />
        </div>
        <div className="mt-1 flex h-5 w-[315px] items-center justify-center">Dimensions</div>
        <Heading label="Font size" open={false} className="ml-3 mt-6" />
        <Heading label="AllTo" open className="ml-[14px] mt-5" />
        <div className="mt-[10px] flex">
          <div className="flex w-[378px] flex-col pl-[9px]">
            <div className="flex h-[31px]">
              {["ElevatorPit", "LayoutService", "SingleFoundation..."].map((t) => (
                <div key={t} className="flex w-[120px] items-center pl-px pt-2">
                  <Net />
                  <span className="flex-1 whitespace-nowrap text-center">{t}</span>
                </div>
              ))}
            </div>
            <div className="flex">
              <Item label="SlabOpening" />
              <Item label="SlabTools" />
              <Item label="StripFoundationR..." />
            </div>
            <div className="flex">
              <Item label="Szegélygerenda" />
              <Item label="TBeamRein" />
              <Item label="WallEdge" />
            </div>
            <div className="flex">
              <Item label="WallOpening" />
              <Item label="WallRein" selected />
            </div>
          </div>
          <div className="ml-[47px] flex w-[10px] flex-col items-center pt-[6px]">
            <svg viewBox="0 0 8 4" className="h-1 w-2">
              <path d="M0 4h8L4 0z" fill="#c9cfd8" />
            </svg>
            <div className="mt-[141px] flex h-[164px] w-[10px] flex-col items-center justify-center gap-px rounded-[3px] border border-[#9aa5b8] bg-white">
              <div className="h-px w-1 bg-[#b9c2cf]" />
              <div className="h-px w-1 bg-[#b9c2cf]" />
              <div className="h-px w-1 bg-[#b9c2cf]" />
              <div className="h-px w-1 bg-[#b9c2cf]" />
            </div>
            <svg viewBox="0 0 8 4" className="mt-[5px] h-1 w-2">
              <path d="M0 0h8L4 4z" fill="#c9cfd8" />
            </svg>
          </div>
        </div>
        <div className="mb-[3px] ml-[10px] mt-auto">
          <Target fill="#f58d8d" stroke="#c22" />
        </div>
        <div className="mb-px flex h-7 items-center bg-[#dce5f0] pl-1.5 text-[#3b4048]">
          <svg viewBox="0 0 18 16" className="mr-2 h-4 w-[18px]" stroke="#5c6673">
            <path d="M1 6h5l1 2h9l-3 7H1z" fill="#e8edf3" strokeWidth="1.300" />
            <path d="M9 1h3v3h3v3h-3v3H9V7H6V4h3z" fill="#9dbbe2" stroke="#4a6a98" />
          </svg>
          New group
          <svg viewBox="0 0 18 16" className="mx-[9px] h-4 w-[18px]" stroke="#5c6673">
            <path d="M4 1h9v8H4z" fill="#b9d2ee" />
            <path d="M1 8h12l3-2l-3 9H1z" fill="#e8edf3" strokeWidth="1.300" />
          </svg>
          Insert element
        </div>
      </div>
    </div>
  );
}

/* ---------- dialog ---------- */
const DTABS: [string, string][] = [
  ["General", "w-[51px]"],
  ["Rebar", "w-[46px]"],
  ["Starter", "w-[46px]"],
  ["Opening Stirrup", "w-[96px]"],
  ["Opening Additional", "w-[116px]"],
  ["Opening Diagonal", "w-[108px]"],
  ["Extra Stirrup", "w-[76px]"],
  ["Spacer", "w-[47px]"],
  ["Section", "w-[51px]"],
  ["Label", "w-[45px]"],
];

const TEETH = Array.from({ length: 16 }, (_, i) => i * 22.5);

const TOOLS: React.ReactNode[] = [
  <>
    <path d="M3 13L20 2l3 1v3L7 18v13l-4-2z" fill={D} stroke="#fff" strokeWidth="0.700" />
    <path d="M6 14L22 3l4 2L9 16v16l-3-1z" fill={D} stroke="#fff" strokeWidth="0.700" />
    <path d="M11 17L28 5l5 2v14L16 34l-5-2z" fill={D} stroke="#fff" strokeWidth="0.700" />
    <path d="M11 17l4 1L33 7M15 18v16" fill="none" stroke="#fff" strokeWidth="0.900" />
  </>,
  <>
    <path d="M18 7l11 11h-3v12h-5v-8h-5v8h-5V18H7z" fill={D} />
    <path d="M18 9V2h-4M18 24v11h-4" fill="none" stroke={D} strokeWidth="1.300" />
    <path d="M9 2l6-3v6zM9 35l6-3v5z" fill={D} />
  </>,
  <>
    <path d="M5 10h27v27H5z" fill={D} />
    <path d="M9.500 14.500h18v18h-18z" fill="none" stroke="#fff" strokeWidth="1.500" />
    <path d="M7.500 12.500h4v4h-4zM25.500 12.500h4v4h-4zM7.500 30.500h4v4h-4zM25.500 30.500h4v4h-4z" fill="#fff" />
    <path d="M10 17v13M27 17v13M12 15h13M12 32h13" stroke={D} strokeWidth="0.700" strokeDasharray="1 3" />
  </>,
  <>
    <path d="M0 0h36v36H0z" fill={D} />
    <path d="M3 11h30M3 20h11v7h19M3 17v6M33 17v14M3 7v8M33 7v8M2 13l3-4M31 13l3-4" fill="none" stroke="#fff" strokeWidth="1.300" />
  </>,
  <>
    <path d="M2 2h32v32H2z" fill={D} />
    <g fill="none" stroke="#fff" strokeWidth="1.400">
      <rect x="11" y="12" width="14" height="13" rx="3" />
      <path d="M8 19H7a2 2 0 01-2-2V7a2 2 0 012-2h9l3 3v2M28 17h1a2 2 0 012 2v10a2 2 0 01-2 2h-9l-3-3v-1" />
    </g>
  </>,
  <>
    <path d="M3 1h22v30H3z" fill={D} />
    <path d="M6 6h9M6 11h12M6 16h9M6 21h9M6 26h9" stroke="#fff" strokeWidth="1.500" />
    <circle cx="23" cy="25" r="8.500" fill="#fff" />
    <circle cx="23" cy="25" r="6.500" fill={D} stroke={D} />
    <circle cx="23" cy="25" r="4.500" fill="#fff" />
    <path d="M21 28l4-6" stroke={D} strokeWidth="1.500" />
    <path d="M28 30l6 5" stroke={D} strokeWidth="2.600" />
  </>,
  <>
    <path d="M2 3l2-2h25l5 6v25l-2 2H4l-2-2z" fill={D} />
    <path d="M8 11l6-9h5l-7 10zM17 12l7-10h3v6l-2 4z" fill="none" stroke="#fff" strokeWidth="1.300" />
    <path d="M8 19h20v13H8z" fill="#fff" />
    <path d="M11 22h14M11 25h9" stroke={D} strokeWidth="1.400" />
    <path d="M10 29h16" stroke={D} strokeWidth="2" strokeDasharray="1 1.500" />
  </>,
  <>
    <path d="M7 1h22l6 10v24H1V11z" fill="#fff" stroke={D} strokeWidth="1.400" />
    <path d="M1 11h12c1 4 9 4 10 0h12v24H1z" fill={D} />
    <path d="M18 17v12M13 24l5 5l5-5" fill="none" stroke="#fff" strokeWidth="1.700" />
  </>,
  <>
    <path d="M4 3h28v7H4z" fill="#fff" stroke={D} strokeWidth="1.500" />
    <path d="M2 11h32v6h-2v17H4V17H2z" fill={D} />
    <path d="M8 21h4v4H8zM15 21h4v4h-4zM8 27h4v3H8zM15 27h4v3h-4zM23 20h4v10h-4z" fill="#fff" />
  </>,
  <>
    {TEETH.map((a) => (
      <rect key={a} x="16" y="0" width="4" height="5" fill={D} transform={`rotate(${a} 18 18)`} />
    ))}
    <circle cx="18" cy="18" r="12.500" fill="none" stroke={D} strokeWidth="6" />
    <circle cx="18" cy="18" r="3.500" fill={D} />
    <path d="M18 8v20M9.300 13l17.400 10M9.300 23l17.400-10" stroke={D} strokeWidth="3" />
  </>,
  <>
    <circle cx="10" cy="26" r="5.500" fill="#fff" stroke={D} strokeWidth="2" />
    <path d="M14 21L31 4" stroke={D} strokeWidth="2.800" />
    <path d="M23 11l6 6M27 7l6 6M26 15l3-4" stroke={D} strokeWidth="2.400" />
  </>,
];

function Radio({ label, on, disabled }: { label: string; on?: boolean; disabled?: boolean }) {
  return (
    <div className={`flex h-5 items-center gap-[4px] ${disabled ? "ml-5 text-[#a5a5a5]" : "text-[#1c1c1c]"}`}>
      <span
        className={`flex size-3 items-center justify-center rounded-full border ${
          disabled ? "border-[#c4c4c4] bg-[#f4f4f4]" : "border-[#7f93b2] bg-gradient-to-b from-[#e8eef7] to-[#dbe7f5]"
        }`}
      >
        {on && <span className={`size-[6px] rounded-full ${disabled ? "bg-[#bdbdbd]" : "bg-[#33537f] ring-1 ring-[#9db3d1]"}`} />}
      </span>
      {label}
    </div>
  );
}

function Options({ pick, className }: { pick: "Middle" | "Longest"; className: string }) {
  return (
    <div className={`flex flex-col tracking-[-0.4px] ${className}`}>
      <div className="flex h-5 items-center gap-[3px] text-[#1c1c1c]">
        <span className="size-[13px] border border-[#8c9fc0] bg-gradient-to-br from-[#dfe6f2] to-[#f4f7fb]" />
        Place per linear meter
      </div>
      <Radio label="Area Reinforcement" on />
      <Radio label="Single Reinforcement" />
      {["Shortest", "Middle", "Longest"].map((t) => (
        <Radio key={t} label={t} on={t === pick} disabled />
      ))}
    </div>
  );
}

const VBARS = [
  [64, 171],
  [100, 148],
  [136.5, 130],
  [172, 110],
  [208, 89],
  [243, 67],
  [279, 48],
  [314, 24],
];
const HBARS = [
  [325, 115.5],
  [272, 138],
  [220, 161],
  [165, 183],
  [113, 206],
  [59, 229],
];

function Dialog() {
  return (
    <div className="absolute left-[545px] top-[145px] flex h-[750px] w-[830px] flex-col border border-[#6d6d6d] bg-[#f0f0f0] text-[12px] tracking-[-0.45px]">
      <div className="flex h-9 shrink-0 items-center bg-[#194a87] text-white">
        <svg viewBox="0 0 30 26" className="ml-[6px] mr-[6px] h-[26px] w-[30px]" fill="none" stroke="#fff">
          <path d="M10 1h6l8 23h-6L13 8L8 17l-4 7H1z" fill="#fff" stroke="none" />
          <path d="M0 24C6 15 14 11 24 11" strokeWidth="1.500" />
          <path d="M4 25C9 18 15 14 23 13" stroke="#194a87" strokeWidth="1.500" />
          <path d="M26 11h3" strokeWidth="1.500" />
        </svg>
        <span className="tracking-[-0.3px]">Wall Reinforcement</span>
        <div className="ml-auto mr-[5px] flex items-center gap-[10px]">
          <div className="h-[3px] w-4 bg-white" />
          <div className="size-4 border-2 border-white" />
          <svg viewBox="0 0 16 16" className="size-4" stroke="#fff" strokeWidth="2.200">
            <path d="M1 1l14 14M15 1L1 15" />
          </svg>
        </div>
      </div>
      <div className="relative flex h-12 shrink-0 bg-white">
        {TOOLS.map((t, i) => (
          <div
            key={i}
            className={`relative flex h-[45px] shrink-0 items-center justify-center ${
              i === 0 ? "w-[46px] rounded border border-[#98a9c4] bg-gradient-to-b from-[#cfdaea] via-white to-white pl-[2px]" : "w-[47px]"
            }`}
          >
            <svg viewBox="0 0 36 38" className="h-[38px] w-9 overflow-visible">
              <g transform="translate(0 1)">{t}</g>
            </svg>
            {i === 2 && <span className="absolute left-[13px] top-[2px] text-[12px] leading-[14px] tracking-[-0.2px] text-[#222]">Abc</span>}
            {i === 8 && <span className="absolute left-[22px] top-[8px] text-[8px] font-bold leading-[10px] tracking-normal text-[#174a87]">1+1</span>}
          </div>
        ))}
        <div className="ml-[4px] mt-[15px] flex h-[15px] w-[40px] items-center justify-center gap-1 bg-[#174a87] font-['Liberation_Sans',sans-serif] text-[10px] font-bold tracking-normal text-white">
          Skip
          <svg viewBox="0 0 9 10" className="h-[9px] w-2">
            <path d="M0 0v10l6-5zM7 0h1.600v10H7z" fill="#fff" />
          </svg>
        </div>
        <div className="ml-[6px] mt-0.5 h-[43px] w-px bg-[#a9c0e0]" />
        <div className="ml-auto mr-[11px] mt-[10px] flex size-[26px] items-center justify-center rounded-full border-2 border-[#174a87] text-[18px] leading-none text-[#174a87]">?</div>
        <svg viewBox="0 0 13 20" className="absolute left-[38px] top-[24px] h-5 w-[13px]">
          <path d="M1 1v14l3-3l3 6l3-1l-3-6h5z" fill="#fff" stroke="#222" />
        </svg>
      </div>
      <div className="flex h-6 shrink-0 items-end whitespace-nowrap pl-1 text-[#1c1c1c]">
        <div className="flex border-l border-[#d5d5d5]">
          {DTABS.map(([t, w]) => (
            <div key={t} className={`flex h-[21px] items-center justify-center border-r border-t border-[#d5d5d5] ${w}`}>
              {t}
            </div>
          ))}
        </div>
        <div className="-mb-px flex h-6 w-[49px] items-center justify-center border-r border-t border-[#dadada] bg-white pb-0.5">Slope</div>
        <div className="mb-[3px] ml-auto mr-[2px] flex size-4 items-center justify-center border border-[#a9a9a9] bg-[#dedede]">
          <svg viewBox="0 0 8 5" className="h-[5px] w-2" fill="none" stroke="#444">
            <path d="M0 0l4 4l4-4" />
          </svg>
        </div>
      </div>
      <div className="mr-[2px] flex h-[617px] shrink-0 border-x-[4px] border-b-[4px] border-t border-x-white border-b-white border-t-[#dadada] bg-[#f0f0f0] pl-px">
        <div className="flex w-[370px] flex-col pt-[78px]">
          <Options pick="Middle" className="ml-[122px]" />
          <svg viewBox="0 0 370 327" className="h-[327px] w-[370px] shrink-0" fill="none" stroke="#1e4f8a">
            <path d="M46.500 163.500L333.500 5v319H46.500z" strokeWidth="1.700" />
            {VBARS.map(([x, y]) => (
              <path key={x} d={`M${x} ${y}V309.500`} strokeWidth="4" />
            ))}
          </svg>
        </div>
        <div className="flex flex-1 flex-col pt-[78px]">
          <Options pick="Longest" className="ml-[154px]" />
          <div className="relative h-[327px] shrink-0">
            <svg viewBox="0 0 440 327" className="h-[327px] w-[440px]" fill="none" stroke="#1e4f8a">
              <path d="M4 244L386.500 83v240.500H4z" strokeWidth="1.700" />
              {HBARS.map(([x, y]) => (
                <path key={x} d={`M${x} ${y}H375`} strokeWidth="3.800" />
              ))}
            </svg>
            <div className="absolute left-[109px] top-[279px] flex items-start whitespace-nowrap text-[#1c1c1c]">
              <span className="w-[131px] leading-4 tracking-[-0.3px]">Minimum rebar length:</span>
              <span className="flex h-[23px] w-[45px] items-center justify-end border border-[#b3c2d9] bg-white pr-1">300</span>
            </div>
          </div>
          <div className="ml-[138px] mt-[5px] flex h-5 items-center gap-[3px] tracking-[-0.4px] text-[#1c1c1c]">
            <span className="flex size-[13px] items-center justify-center border border-[#8c9fc0] bg-[#dfe9f5]">
              <svg viewBox="0 0 10 10" className="size-[10px]" fill="none" stroke="#27476f" strokeWidth="2">
                <path d="M1 4.500l3 3.500l5-7" />
              </svg>
            </span>
            Include stirrup in slope area
          </div>
        </div>
      </div>
      <div className="flex flex-1 items-stretch border-t border-[#dadada] pt-px text-[#1c1c1c]">
        <div className="flex flex-1 items-center pl-0.5 tracking-[-0.38px]">Create reinforcement</div>
        <div className="flex w-[109px] items-center border-l border-[#dadada] pl-1">version 2.1</div>
      </div>
    </div>
  );
}

function Viewport() {
  return (
    <div className="relative h-[866px] flex-1 border-l-2 border-[#9aa5b5] bg-[#e7e7e7]">
      <div className="absolute left-[658px] top-0 flex h-6 w-[144px] items-center justify-center whitespace-nowrap border border-[#d5dae2] bg-[#e6e8ed] pt-px text-[15px] leading-5 tracking-[-0.35px] text-[#a3adbb]">
        Central perspective:3
      </div>
      <svg viewBox="0 0 100 430" className="absolute left-[912px] top-[123px] h-[430px] w-[100px]">
        <path d="M0 24L70 5h16L58 421L0 426z" fill="#929292" />
        <path d="M0 24L70 5h16L0 30z" fill="#a6a6a6" />
        <path d="M0 415l46-5l12 11l-58 5z" fill="#a3a3a3" />
      </svg>
      <span className="absolute left-[61px] top-[744px] font-['Liberation_Sans',sans-serif] text-[17px] leading-[22px] text-[#2233cc]">Z</span>
      <span className="absolute left-[87px] top-[795px] font-['Liberation_Sans',sans-serif] text-[17px] leading-[22px] text-[#e03a3a]">X</span>
      <svg viewBox="0 0 56 70" className="absolute left-[52px] top-[745px] h-[70px] w-[56px]" fill="none">
        <path d="M12 54V33" stroke="#1520a8" strokeWidth="4" />
        <path d="M12 22l5 13H7z" fill="#0a0f78" />
        <path d="M13 55h18" stroke="#c8201a" strokeWidth="4.500" />
        <path d="M28 50l10 5l-10 5z" fill="#a5140f" />
        <path d="M3 50l8 1l-3 5v6H7v-6z" fill="#2cae44" stroke="#2cae44" strokeWidth="1.500" />
      </svg>
      <div className="absolute left-[6px] top-[840px]">
        <Target fill="#ece9dd" stroke="#aaa" />
      </div>
    </div>
  );
}

function StatusCell({ className, children }: { className: string; children: React.ReactNode }) {
  return <div className={`flex h-[17px] shrink-0 items-center border-l border-[#cfcfcf] pl-[3px] ${className}`}>{children}</div>;
}

export default function App() {
  return (
    <div className="relative flex h-[1080px] w-[1920px] flex-col overflow-hidden bg-white font-['Open_Sans','Noto_Sans',sans-serif]">
      <TitleBar />
      <div className="flex h-[99px] shrink-0">
        <div className="flex w-[46px] flex-col items-center pt-[27px]">
          <svg viewBox="0 0 34 30" className="h-[30px] w-[33px]" fill="#dce9f7" stroke="#47628c" strokeWidth="1.800">
            <path d="M3 2l9-1l20 4v19l-20 4l-9-3C1 20 1 8 3 2z" />
            <path d="M3 2c5 1 8 3 8 6v20M11 5l21 1M2 15h9l21 0M21 4v22" fill="none" />
            <path d="M3 25l9 3l20-4" fill="none" stroke="#27364d" strokeWidth="2.400" />
          </svg>
          <Caret className="mt-[10px] text-black" />
        </div>
        <div className="flex flex-1 flex-col">
          <MenuRow />
          <Ribbon />
        </div>
      </div>
      <div className="flex h-[866px] shrink-0 gap-1">
        <LibraryPanel />
        <Viewport />
      </div>
      <div className="flex h-[29px] shrink-0 border-b border-[#8f98aa] bg-[#dfeaf6]">
        <div className="flex w-[290px] items-center whitespace-nowrap border-r border-[#a9b0bb] bg-white pl-[6px] text-[11.5px] font-bold tracking-[-0.26px] text-[#111]">
          <div className="mr-[5px] h-6 w-px bg-[#a9b0bb]" />
          Customize parameters and create reinforcement
        </div>
      </div>
      <div className="flex h-6 items-center whitespace-nowrap text-[12px] tracking-[-0.3px] text-[#5a5a5a]">
        <div className="flex-1 pl-px">Press F1 to get Help.</div>
        <StatusCell className="w-[197px]">
          Country: <span className="ml-2 text-black">USA</span>
        </StatusCell>
        <StatusCell className="w-[320px]">
          Drawing type: <span className="ml-1.5 text-black">Scale definition</span>
        </StatusCell>
        <StatusCell className="w-[106px]">
          <span className="w-[38px]">Scale:</span>
          <span className="text-[#222]">1 : 100</span>
        </StatusCell>
        <StatusCell className="w-[98px]">
          <span className="w-[49px]">Length:</span>
          <span className="text-[#a9a9a9]">mm</span>
        </StatusCell>
        <StatusCell className="w-[89px]">
          <span className="w-[42px]">Angle:</span>
          <span className="text-[#222]">0.000</span>
        </StatusCell>
        <StatusCell className="w-[50px]">
          <span className="text-[#a9a9a9]">deg</span>
        </StatusCell>
        <StatusCell className="w-[50px]">
          <span className="w-[21px]">%:</span>1
        </StatusCell>
        <StatusCell className="w-[107px]">
          <svg viewBox="0 0 17 16" className="ml-px mr-[4px] h-4 w-[17px]">
            <path d="M1 1h15v11h-5l-2.500 3L6 12H1z" fill="#fff" stroke="#444" strokeWidth="1.200" />
            <path d="M8.500 2.500v5M8.500 9v2" stroke={R} strokeWidth="1.800" />
          </svg>
          <span className="text-[#222]">Notifications</span>
        </StatusCell>
      </div>
      <Dialog />
      <div className="absolute left-[580px] top-[1000px] flex h-[58px] w-[760px] items-center justify-center whitespace-nowrap bg-[#080808]/75 pt-[3px] font-['Roboto',sans-serif] text-[48px] text-white">
        Slope wall with different rebar type
      </div>
    </div>
  );
}
